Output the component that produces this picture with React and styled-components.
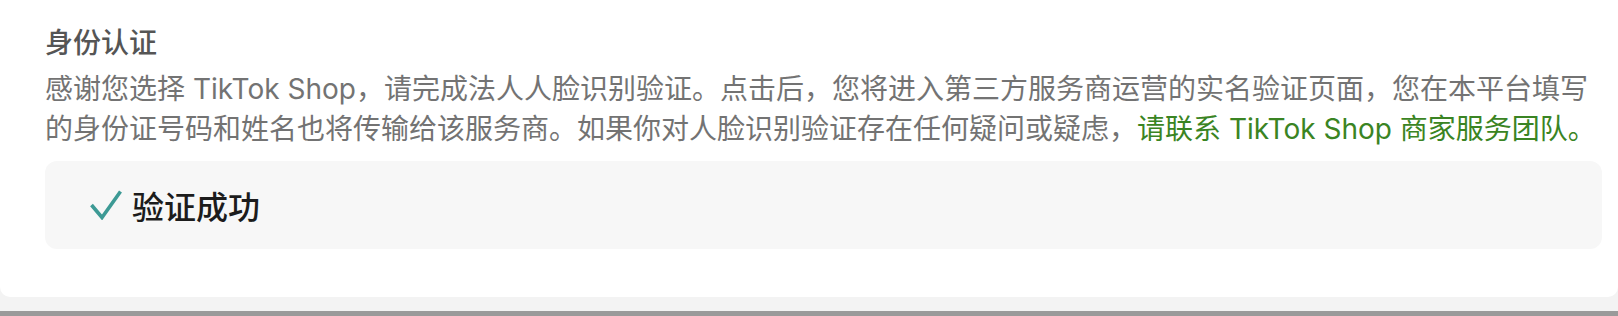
import React from 'react';
import styled, { createGlobalStyle } from 'styled-components';

const GlobalStyle = createGlobalStyle`
  html, body {
    margin: 0;
    padding: 0;
    background: #f3f3f3;
  }
  body {
    font-family: "PingFang SC", Inter, "Noto Sans CJK SC", sans-serif;
  }
`;

const Page = styled.div`
  width: 1618px;
  height: 316px;
  display: flex;
  flex-direction: column;
  background: #f3f3f3;
`;

const Panel = styled.section`
  background: #ffffff;
  border-radius: 0 0 10px 10px;
  padding: 23px 16px 48px 45px;
`;

const Title = styled.h3`
  margin: 0 0 6px;
  font-size: 28px;
  line-height: 40px;
  font-weight: 500;
  color: #555555;
`;

const Description = styled.p`
  margin: 0;
  font-size: 28px;
  line-height: 40px;
  color: #737373;
`;

const Link = styled.a`
  color: #3a8423;
  text-decoration: none;
  cursor: pointer;
`;

const StatusCard = styled.div`
  margin-top: 12px;
  height: 88px;
  display: flex;
  align-items: center;
  gap: 10px;
  padding: 0 45px;
  background: #f7f7f7;
  border-radius: 12px;
`;

const StatusText = styled.span`
  font-size: 32px;
  font-weight: 500;
  color: #1c1c1c;
`;

const Spacer = styled.div`
  flex: 1;
`;

const BottomBar = styled.div`
  height: 5px;
  background: #9a9a9a;
`;

const CheckIcon = () => (
  <svg width="32" height="30" viewBox="0 0 32 30" fill="none">
    <polyline
      points="1.5,15 12,27.5 30.5,1.5"
      stroke="#3d9a95"
      strokeWidth="3.6"
      strokeLinecap="butt"
      strokeLinejoin="miter"
    />
  </svg>
);

const App = () => (
  <Page>
    <GlobalStyle />
    <Panel>
      <Title>身份认证</Title>
      <Description>
        感谢您选择 TikTok Shop，请完成法人人脸识别验证。点击后，您将进入第三方服务商运营的实名验证页面，您在本平台填写的身份证号码和姓名也将传输给该服务商。如果你对人脸识别验证存在任何疑问或疑虑，
        <Link>请联系 TikTok Shop 商家服务团队。</Link>
      </Description>
      <StatusCard>
        <CheckIcon />
        <StatusText>验证成功</StatusText>
      </StatusCard>
    </Panel>
    <Spacer />
    <BottomBar />
  </Page>
);

export default App;
